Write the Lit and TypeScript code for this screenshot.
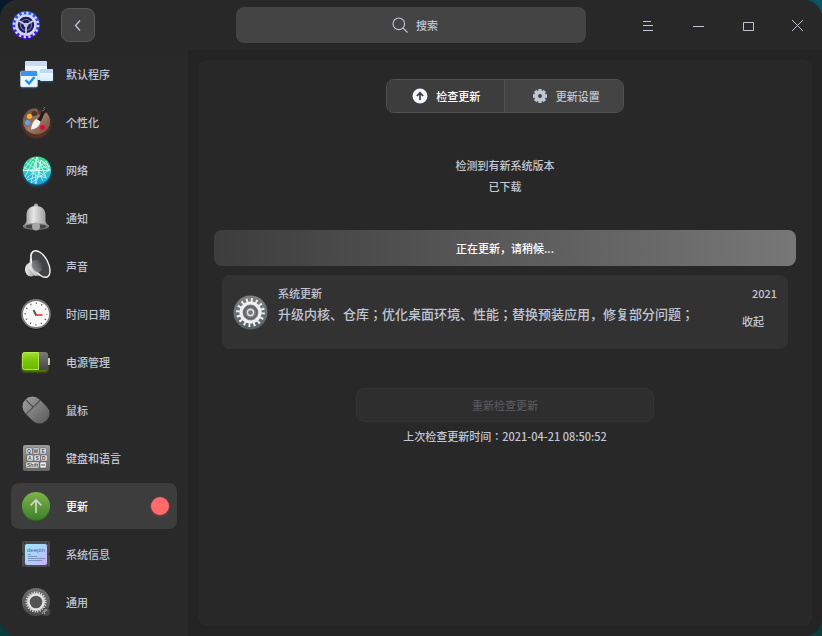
import { LitElement, html, svg, css } from "lit";
import { customElement, state } from "lit/decorators.js";
import { classMap } from "lit/directives/class-map.js";

const defaultApps = svg`
  <defs>
    <linearGradient id="da" x2="0" y2="1"><stop stop-color="#fff"/><stop offset="1" stop-color="#d3ebff"/></linearGradient>
    <filter id="daf" x="-30%" y="-30%" width="160%" height="160%"><feGaussianBlur stdDeviation="1.3"/></filter>
  </defs>
  <g filter="url(#daf)" fill="#12639d" opacity=".7"><rect x="3" y="17" width="17" height="15"/><rect x="22" y="15" width="13" height="11"/></g>
  <rect x="7" y="5" width="22" height="19" rx="1.5" fill="url(#da)"/>
  <path d="M7 10V6.5Q7 5 8.5 5h19Q29 5 29 6.5V10Z" fill="#c6dcf6"/>
  <rect x="22" y="13" width="13" height="12" rx="1" fill="url(#da)"/>
  <path d="M22 17v-3q0-1 1-1h11q1 0 1 1v3Z" fill="#bcd9fa"/>
  <rect x="2.5" y="15" width="17" height="16" rx="1.5" fill="#eef6ff" stroke="#b9cadb" stroke-width=".6"/>
  <path d="M3 20v-4q0-1 1-1h14q1 0 1 1v4Z" fill="#3a94f4"/>
  <path d="M7.500 24l3.500 3.500 5.500-6.500" fill="none" stroke="#1391ff" stroke-width="2.400"/>`;

const palette = svg`
  <defs>
    <linearGradient id="pa" x2="1" y2="1"><stop stop-color="#5d4436"/><stop offset=".5" stop-color="#a07b69"/><stop offset="1" stop-color="#71493a"/></linearGradient>
    <filter id="paf" x="-30%" y="-30%" width="160%" height="160%"><feGaussianBlur stdDeviation="1.5"/></filter>
  </defs>
  <circle cx="18.500" cy="20" r="13.500" fill="#8b4325" opacity=".75" filter="url(#paf)"/>
  <path d="M15 4.500C8.500 5.500 4.800 11.500 5 17.500c.2 7.500 6 13 13.500 13S32 25 32 17.500c0-4-1.500-7-4-9.300L24 13l-4.500-3.500Q20.500 5 18 4.500Z" fill="url(#pa)"/>
  <path d="M5.500 21c2 6 7.500 9.500 13 9.500s11-3.500 13-9.500c-1 7.500-6 11.500-13 11.500S6 28.500 5.500 21Z" fill="#5b3020"/>
  <ellipse cx="16.500" cy="9.500" rx="3" ry="2.500" fill="#4a3328"/>
  <circle cx="11.500" cy="12.300" r="2.600" fill="#f7b13c"/>
  <circle cx="9.500" cy="18.500" r="2.600" fill="#5aa5ec"/>
  <circle cx="24.500" cy="23.300" r="2.600" fill="#d4133d"/>
  <path d="M25 4l-3 8-3 3.500 3.500 2.500 2-4 3-8Z" fill="#1f1c1b"/>
  <path d="M25 4.500l2-1M24 7l3-1.500" stroke="#888" stroke-width=".8"/>
  <path d="M18.500 15c-3 1.500-5 5.500-5.500 10.500 4-.2 8.500-2.500 9.500-8Z" fill="#f7f5f2"/>`;

const network = svg`
  <defs>
    <linearGradient id="ne" x2="0" y2="1"><stop stop-color="#2fdc7e"/><stop offset=".5" stop-color="#35cdc0"/><stop offset="1" stop-color="#159eea"/></linearGradient>
    <filter id="nef" x="-30%" y="-30%" width="160%" height="160%"><feGaussianBlur stdDeviation="1.5"/></filter>
  </defs>
  <circle cx="19" cy="20" r="14" fill="#08779c" opacity=".8" filter="url(#nef)"/>
  <circle cx="19" cy="18.500" r="14" fill="url(#ne)"/>
  <g fill="none" stroke="#dffff7" stroke-width=".8" opacity=".9">
    <path d="M5 18.500h26M19 5l-6 26M19 5l9 20M19 5l-2 27M8 10l20 15M8 27l20-18M5 18.500L15 6l16 12M13 31l18-13M7 25l8-16 10 20M18 32l5-24 9 7M9 28l12-4 8 2M6 15l8 5 5-15M28 9l4 10-9-11M23 8l-3 17-8-7 17-3"/>
  </g>`;

const bell = svg`
  <defs>
    <linearGradient id="be"><stop stop-color="#8a8a8a"/><stop offset=".4" stop-color="#e6e6e6"/><stop offset="1" stop-color="#8b8b8b"/></linearGradient>
    <linearGradient id="bf" x2="0" y2="1"><stop stop-color="#999"/><stop offset="1" stop-color="#666"/></linearGradient>
  </defs>
  <circle cx="18" cy="5.500" r="2" fill="#aaa"/>
  <path d="M8.500 15C8.500 9 12.500 6 18 6s9.500 3 9.500 9v6q.5 3 3.500 4.500V27H5v-1.500Q8 24 8.500 21Z" fill="url(#be)"/>
  <ellipse cx="18" cy="26.500" rx="13" ry="3.500" fill="url(#bf)"/>
  <ellipse cx="18" cy="26.500" rx="10.500" ry="2.300" fill="#464646"/>
  <path d="M14 26.500a4 4 0 0 1 8 0a4 4 0 0 1-8 0Z" fill="#a6a6a6"/>`;

const speaker = svg`
  <defs>
    <linearGradient id="sp"><stop stop-color="#8b8b8b"/><stop offset="1" stop-color="#4c4c4e"/></linearGradient>
    <linearGradient id="sq"><stop stop-color="#eee"/><stop offset="1" stop-color="#8b8b8b"/></linearGradient>
  </defs>
  <ellipse cx="13" cy="21.500" rx="6" ry="7" fill="url(#sq)"/>
  <path d="M13 4c-1.500 5-.5 11-3 15.500L17 28c5-1 8 .5 11.500 1.500Z" fill="url(#sq)"/>
  <ellipse cx="22.500" cy="16" rx="7.500" ry="14.500" transform="rotate(-28 22.500 16)" fill="#414347" stroke="#f5f5f5" stroke-width="1.400"/>
  <ellipse cx="19" cy="18" rx="5" ry="6.500" transform="rotate(-28 19 18)" fill="url(#sp)"/>`;

const clock = svg`
  <circle cx="18" cy="19" r="15" fill="#1d1d1d"/>
  <circle cx="18" cy="18" r="14" fill="#f8f8f8" stroke="#777" stroke-width="1.800"/>
  <circle cx="18" cy="18" r="10.800" fill="none" stroke="#555" stroke-width="1.600" stroke-dasharray="1 4.655" stroke-dashoffset=".5"/>
  <path d="M17 19h7.500" stroke="#f65757" stroke-width="2"/>
  <path d="M18 19l-2.500-5" stroke="#555" stroke-width="2"/>`;

const battery = svg`
  <defs>
    <linearGradient id="ba" x2="0" y2="1"><stop stop-color="#a5e03a"/><stop offset=".4" stop-color="#7fc90d"/><stop offset="1" stop-color="#67b800"/></linearGradient>
    <linearGradient id="bb" x2="0" y2="1"><stop stop-color="#7b7b7b"/><stop offset="1" stop-color="#454545"/></linearGradient>
    <filter id="baf" x="-30%" y="-30%" width="160%" height="160%"><feGaussianBlur stdDeviation="1.3"/></filter>
  </defs>
  <rect x="4" y="11" width="26" height="17" rx="3" fill="#6ca000" opacity=".75" filter="url(#baf)"/>
  <rect x="29" y="14" width="3" height="7" rx="1" fill="#ccc"/>
  <rect x="4" y="8" width="26" height="18" rx="3" fill="url(#bb)"/>
  <path d="M20.500 8.500h-14q-2 0-2 2v13q0 2 2 2h14Z" fill="url(#ba)" stroke="#baf04a" stroke-width=".9"/>`;

const mouse = svg`
  <defs><linearGradient id="mo" x2="0" y2="1"><stop stop-color="#999"/><stop offset="1" stop-color="#606060"/></linearGradient></defs>
  <g transform="rotate(-45 18 18)">
    <rect x="8" y="3" width="20" height="30" rx="10" fill="url(#mo)"/>
    <path d="M8 14h20M18 3v11" stroke="#454545" stroke-width="1" fill="none"/>
  </g>`;

const keyboard = svg`
  <defs><linearGradient id="ke" x2="0" y2="1"><stop stop-color="#9b9b9b"/><stop offset="1" stop-color="#666"/></linearGradient></defs>
  <rect x="5" y="5" width="27" height="26" rx="2" fill="url(#ke)"/>
  <g fill="#ececec" stroke="#555" stroke-width=".5">
    <rect x="8" y="8" width="6.200" height="6" rx="1"/><rect x="15" y="8" width="6.200" height="6" rx="1"/><rect x="22" y="8" width="6.200" height="6" rx="1"/>
    <rect x="9" y="15" width="6.200" height="6" rx="1"/><rect x="16" y="15" width="6.200" height="6" rx="1"/><rect x="23" y="15" width="6.200" height="6" rx="1"/>
    <rect x="8" y="22" width="13" height="6" rx="1"/><rect x="22" y="22" width="6.200" height="6" rx="1"/>
  </g>
  <g class="keys"><text x="9" y="13">Q</text><text x="15.500" y="13">W</text><text x="23.500" y="13">E</text><text x="10" y="20">A</text><text x="17.500" y="20">S</text><text x="24" y="20">D</text><text x="9" y="27">Shift</text></g>
  <path d="M23 25h4" stroke="#555"/>`;

const update = svg`
  <defs>
    <linearGradient id="up" x2="0" y2="1"><stop stop-color="#7db34b"/><stop offset="1" stop-color="#3f7e2b"/></linearGradient>
  </defs>
  <circle cx="18" cy="19" r="14" fill="#2d6b1a"/>
  <circle cx="18" cy="18" r="14" fill="url(#up)"/>
  <path d="M18 25V12M12.500 17.500L18 12l5.500 5.500" fill="none" stroke="#d5d8d2" stroke-width="1.600"/>`;

const systemInfo = svg`
  <defs><linearGradient id="sy" x2="1" y2="1"><stop stop-color="#9fe8ff"/><stop offset=".5" stop-color="#acd0fa"/><stop offset="1" stop-color="#d3acf8"/></linearGradient></defs>
  <path d="M6 5h24q2 0 2 2v9l-1.500 2 1.500 2v9q0 2-2 2H6q-2 0-2-2v-9l1.500-2L4 16V7q0-2 2-2Z" fill="#4b4b4e"/>
  <rect x="7" y="8" width="22" height="21" rx="2" fill="url(#sy)"/>
  <text class="brand" x="9" y="16">deepin</text>
  <path d="M10 18.500h3M10 20.500h9M10 22.500h17M10 24.500h14" stroke="#6e86a8" stroke-width=".8"/>
  <path d="M6 7h1M29 7h1M6 30h1M29 30h1" stroke="#222"/>`;

const general = svg`
  <defs><linearGradient id="ge" x2="0" y2="1"><stop stop-color="#707070"/><stop offset="1" stop-color="#4a4a4a"/></linearGradient></defs>
  <circle cx="18" cy="18" r="14" fill="url(#ge)"/>
  <circle cx="18" cy="18" r="9.600" fill="none" stroke="#e2e2e2" stroke-width="1.800" stroke-dasharray="1.200 1.313"/>
  <circle cx="18" cy="18" r="7.600" fill="#555" stroke="#e2e2e2" stroke-width="2.600"/>
  <circle cx="28" cy="28" r="4" fill="#4a4a4a"/>
  <path d="M24.500 30a4 4 0 0 1 4-4.500M26.500 30v-2.500l3-1.500" fill="none" stroke="#aaa" stroke-width="1"/>`;

const entries = [
  { id: "defapp", label: "默认程序", icon: defaultApps },
  { id: "personalization", label: "个性化", icon: palette },
  { id: "network", label: "网络", icon: network },
  { id: "notification", label: "通知", icon: bell },
  { id: "sound", label: "声音", icon: speaker },
  { id: "datetime", label: "时间日期", icon: clock },
  { id: "power", label: "电源管理", icon: battery },
  { id: "mouse", label: "鼠标", icon: mouse },
  { id: "keyboard", label: "键盘和语言", icon: keyboard },
  { id: "update", label: "更新", icon: update, badge: true },
  { id: "systeminfo", label: "系统信息", icon: systemInfo },
  { id: "general", label: "通用", icon: general },
];

@customElement("title-bar")
class TitleBar extends LitElement {
  static styles = css`
    :host { display: grid; grid-template-columns: minmax(0, 1fr) minmax(120px, 350px) minmax(0, 1fr); align-items: center; height: 50px; background: #282828; color: #c0c6d4; }
    .start { display: flex; align-items: center; gap: 20px; padding-left: 11px; }
    .end { display: flex; justify-content: flex-end; }
    svg { display: block; flex: none; }
    button { padding: 0; border: 0; background: none; color: inherit; display: grid; place-items: center; font: inherit; }
    .back { width: 34px; height: 34px; border: 1px solid #575757; border-radius: 8px; background: #424242; }
    .search { display: flex; align-items: center; justify-content: center; gap: 8px; height: 36px; padding-left: 8px; box-sizing: border-box; border-radius: 8px; background: #444; }
    .query { width: 22px; padding: 0; border: 0; outline: 0; background: none; color: inherit; font: inherit; line-height: 16px; }
    .query::placeholder { color: #c0c6d4; opacity: 1; }
    .control { width: 50px; height: 50px; }
  `;

  render() {
    return html`
      <div class="start">
        <svg width="30" height="30" viewBox="0 0 30 30" aria-hidden="true">
          <defs><linearGradient id="lg" x2="0" y2="1"><stop stop-color="#2866e6"/><stop offset="1" stop-color="#4a0be0"/></linearGradient></defs>
          <circle cx="15" cy="15" r="14" fill="url(#lg)"/>
          <circle cx="15" cy="15" r="12" fill="none" stroke="#d3d6ef" stroke-width="2.600" stroke-dasharray="2.200 2.512"/>
          <circle cx="15" cy="15" r="9.500" fill="#1b1c5c" stroke="#d3d6ef" stroke-width="2.600"/>
          <circle cx="15" cy="15" r="5.500" fill="none" stroke="#70769f" stroke-width="1.200"/>
          <path d="M15 15v8.500M15 15L7.500 10.700M15 15l7.500-4.300" stroke="#c3c6df" stroke-width="1.800"/>
          <circle cx="15" cy="15" r="2.300" fill="#c3c6df"/>
        </svg>
        <button class="back" aria-label="返回">
          <svg width="16" height="16" viewBox="0 0 16 16" fill="none" stroke="currentColor" stroke-width="1.300"><path d="M10 3.500L5.500 8.500l4.500 5"/></svg>
        </button>
      </div>
      <label class="search">
        <svg width="16" height="16" viewBox="0 0 16 16" fill="none" stroke="currentColor" stroke-width="1.100"><circle cx="6.800" cy="6.800" r="5.800"/><path d="M11 11l4.500 4.500"/></svg>
        <input class="query" type="text" placeholder="搜索" aria-label="搜索" />
      </label>
      <div class="end">
        <button class="control" aria-label="菜单"><svg width="14" height="14" viewBox="0 0 14 14" stroke="currentColor"><path d="M3 3.500h8M3 7.500h10M3 12.500h10"/></svg></button>
        <button class="control" aria-label="最小化"><svg width="14" height="14" viewBox="0 0 14 14" stroke="currentColor"><path d="M3 8.500h11"/></svg></button>
        <button class="control" aria-label="最大化"><svg width="14" height="14" viewBox="0 0 14 14" stroke="currentColor" fill="none"><path d="M3.500 4.500h10v8h-10Z"/></svg></button>
        <button class="control" aria-label="关闭"><svg width="14" height="14" viewBox="0 0 14 14" stroke="currentColor"><path d="M2 2l11 11M13 2L2 13"/></svg></button>
      </div>
    `;
  }
}

@customElement("side-nav")
class SideNav extends LitElement {
  @state() current = "update";

  static styles = css`
    :host { display: block; background: #292929; }
    .list { display: flex; flex-direction: column; gap: 2px; padding: 1px 11px 11px; }
    .item { display: flex; align-items: center; gap: 12px; height: 46px; padding: 0 8px 0 7px; border-radius: 8px; color: #c0c6d4; text-decoration: none; }
    .current { background: #3d3d3d; color: #fff; }
    .icon { flex: none; overflow: visible; }
    .badge { width: 18px; height: 18px; margin-left: auto; border-radius: 50%; background: #ff6b6b; box-shadow: 0 1px 3px #d9484880; }
    .keys { font: bold 5px "Liberation Sans", sans-serif; fill: #444; }
    .brand { font: 6px "Liberation Sans", sans-serif; fill: #4a6a8a; }
  `;

  render() {
    return html`<nav class="list">
      ${entries.map(
        (e) => html`<a
          class=${classMap({ item: true, current: e.id === this.current })}
          href="#${e.id}"
          @click=${() => (this.current = e.id)}
        >
          <svg class="icon" width="36" height="36" viewBox="0 0 36 36" aria-hidden="true">${e.icon}</svg>
          <span>${e.label}</span>
          ${e.badge ? html`<span class="badge"></span>` : ""}
        </a>`
      )}
    </nav>`;
  }
}

@customElement("update-page")
class UpdatePage extends LitElement {
  static styles = css`
    :host { display: flex; flex-direction: column; padding: 19px 16px; border-radius: 8px; background: #282828; color: #c0c6d4; }
    button { padding: 0; margin: 0; border: 0; background: none; color: inherit; font: inherit; }
    .tabs { display: flex; align-self: center; width: 238px; height: 34px; box-sizing: border-box; border: 1px solid #515151; border-radius: 8px; overflow: hidden; }
    .tab { flex: 1; display: flex; align-items: center; justify-content: center; gap: 8px; padding-left: 4px; background: #444; }
    .tab + .tab { border-left: 1px solid #515151; }
    .selected { padding-left: 2px; background: #3d3d3d; color: #fff; }
    .state { margin: 42px 0 33px; text-align: center; line-height: 21px; }
    .line { margin: 0; }
    .progress { display: grid; place-items: center; height: 36px; border-radius: 8px; background: linear-gradient(90deg, #3d3d3d, #777); color: #fff; }
    .card { display: flex; align-items: flex-start; gap: 10px; min-height: 74px; box-sizing: border-box; margin: 9px 8px 0; padding: 9px 11px; border-radius: 8px; background: #323232; }
    .gear { flex: none; margin-top: 11px; }
    .info { flex: 1; min-width: 0; }
    .name { margin: 0; font: inherit; line-height: 18px; }
    .detail { margin: 0; font-size: 13px; line-height: 24px; }
    .side { display: flex; flex-direction: column; align-items: flex-end; gap: 10px; line-height: 18px; }
    .fold { margin-right: 13px; }
    .recheck { align-self: center; width: 298px; max-width: 100%; height: 34px; margin-top: 39px; border: 1px solid #343434; border-radius: 8px; background: #2e2e2e; color: #55575b; }
    .last { margin: 5px 0 0; text-align: center; line-height: 18px; }
  `;

  render() {
    return html`
      <div class="tabs" role="tablist">
        <button class="tab selected" role="tab" aria-selected="true">
          <svg width="16" height="16" viewBox="0 0 16 16" aria-hidden="true"><circle cx="8" cy="8" r="7.500" fill="#f4f6ff"/><path d="M8 12V5M4.800 8L8 4.800 11.200 8" fill="none" stroke="#3d3d3d" stroke-width="1.700"/></svg>
          检查更新
        </button>
        <button class="tab" role="tab" aria-selected="false">
          <svg width="16" height="16" viewBox="0 0 16 16" aria-hidden="true"><g fill="#c0c6d4"><circle cx="8" cy="8" r="5.600"/><path d="M6.300 1h3.400v14H6.300zM1 6.300h14v3.400H1z"/><path d="M6.300 1h3.400v14H6.300zM1 6.300h14v3.400H1z" transform="rotate(45 8 8)"/></g><circle cx="8" cy="8" r="2" fill="#444"/></svg>
          更新设置
        </button>
      </div>
      <div class="state">
        <p class="line">检测到有新系统版本</p>
        <p class="line">已下载</p>
      </div>
      <div class="progress" role="progressbar" aria-label="更新进度">正在更新，请稍候...</div>
      <article class="card">
        <svg class="gear" width="35" height="35" viewBox="0 0 35 35" aria-hidden="true">
          <defs><linearGradient id="cg" x2="0" y2="1"><stop stop-color="#818181"/><stop offset="1" stop-color="#566064"/></linearGradient></defs>
          <circle cx="17.500" cy="17.500" r="17" fill="url(#cg)"/>
          <circle cx="17.500" cy="17.500" r="12.500" fill="none" stroke="#f0f0f0" stroke-width="3.800" stroke-dasharray="1.900 3.009"/>
          <circle cx="17.500" cy="17.500" r="9.500" fill="#858585" stroke="#f0f0f0" stroke-width="3.200"/>
          <circle cx="17.500" cy="17.500" r="6.200" fill="none" stroke="#5e6264" stroke-width="1.800"/>
          <circle cx="17.500" cy="17.500" r="3" fill="#777" stroke="#e5e5e5" stroke-width="1.300"/>
        </svg>
        <div class="info">
          <h2 class="name">系统更新</h2>
          <p class="detail">升级内核、仓库；优化桌面环境、性能；替换预装应用，修复部分问题；</p>
        </div>
        <div class="side">
          <span>2021</span>
          <button class="fold">收起</button>
        </div>
      </article>
      <button class="recheck" disabled>重新检查更新</button>
      <p class="last">上次检查更新时间：2021-04-21 08:50:52</p>
    `;
  }
}

@customElement("app-root")
class AppRoot extends LitElement {
  static styles = css`
    :host { display: block; min-height: 100vh; background: linear-gradient(#06182a, #083c3c) left / 50% 100% no-repeat, linear-gradient(#085468, #0e3c38) right / 50% 100% no-repeat; font: 500 11px/16px "Noto Sans CJK JP", "Noto Sans CJK SC", sans-serif; }
    .window { display: flex; flex-direction: column; min-height: 100vh; border-radius: 18px; overflow: hidden; background: #292929; }
    .body { flex: 1; display: grid; grid-template-columns: 188px minmax(0, 1fr); }
    .content { display: grid; padding: 10px; background: #242424; }
  `;

  render() {
    return html`<div class="window">
      <title-bar></title-bar>
      <div class="body">
        <side-nav></side-nav>
        <main class="content"><update-page></update-page></main>
      </div>
    </div>`;
  }
}
